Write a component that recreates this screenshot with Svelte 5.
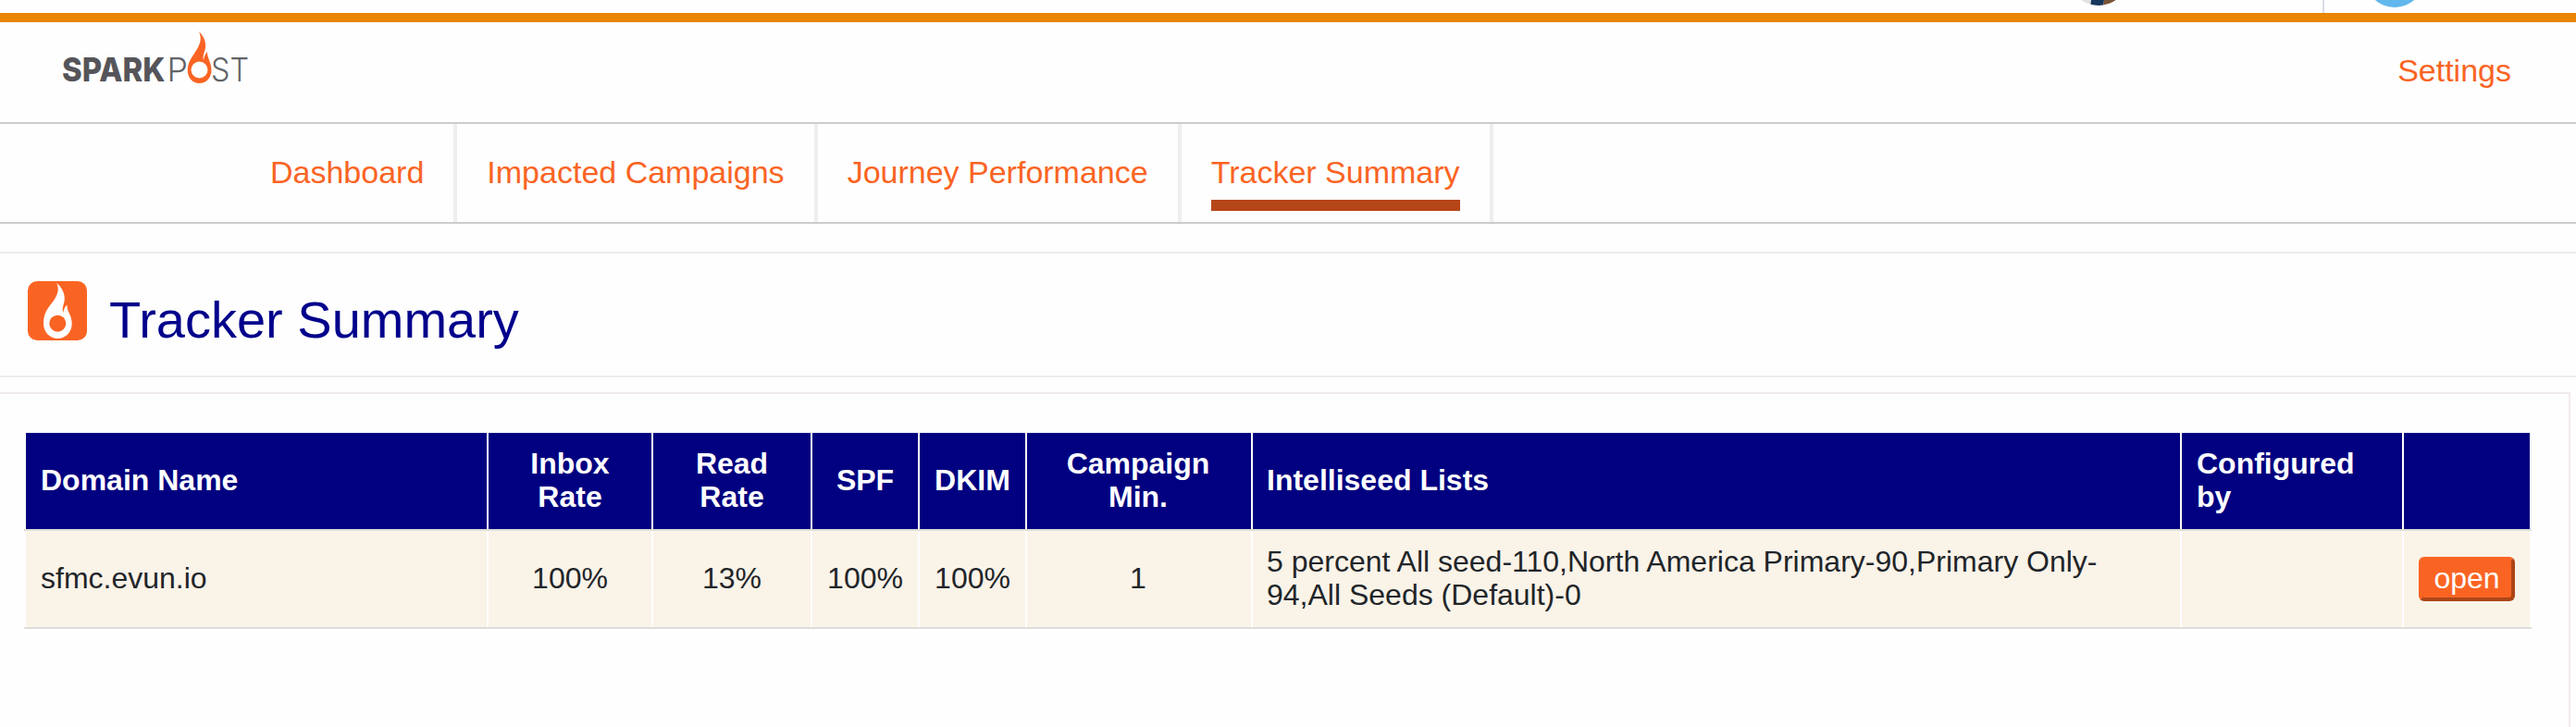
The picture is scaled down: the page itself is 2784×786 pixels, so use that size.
<script>
  const tabs = ['Dashboard', 'Impacted Campaigns', 'Journey Performance', 'Tracker Summary'];
  const active = 'Tracker Summary';
  const columns = [
    { label: 'Domain Name', left: true },
    { label: 'Inbox Rate' },
    { label: 'Read Rate' },
    { label: 'SPF' },
    { label: 'DKIM' },
    { label: 'Campaign Min.' },
    { label: 'Intelliseed Lists', left: true },
    { label: 'Configured by', left: true },
    { label: '' }
  ];
</script>

<div class="page">
  <div class="topbar">
    <svg width="680" height="14" viewBox="2104 0 680 14">
      <defs>
        <clipPath id="avatar"><circle cx="2268" cy="-26" r="32" /></clipPath>
      </defs>
      <g clip-path="url(#avatar)">
        <rect x="2236" y="0" width="24" height="8" fill="#dfe1e3" />
        <path d="M2260 0h14l-1 8h-14z" fill="#17365d" />
        <path d="M2274 0h16v8h-17z" fill="#7a5238" />
      </g>
      <rect x="2510" y="0" width="2" height="14" fill="#d8dde6" />
      <circle cx="2588" cy="-24" r="32" fill="#62b7ed" />
    </svg>
  </div>

  <header>
    <svg class="logo" width="224" height="80" viewBox="56 32 224 80">
      <g font-size="36" font-family="Inter, sans-serif">
        <text x="67" y="87.500" font-weight="800" fill="#55555a" textLength="111.500" lengthAdjust="spacingAndGlyphs">SPARK</text>
        <g font-weight="300" fill="#636468">
          <text x="180.500" y="87.500" textLength="22.500" lengthAdjust="spacingAndGlyphs">P</text>
          <text x="228" y="87.500" textLength="41" lengthAdjust="spacingAndGlyphs">ST</text>
        </g>
      </g>
      <circle cx="215.500" cy="75.500" r="11" fill="#fff" />
      <path fill="#fa6423" fill-rule="evenodd" d="M215 34C221 40 223.500 47 221.500 54C220 59 219 61 220 65C220.500 61 222 58 224 56C223.500 62 228.500 67 228.500 76C228.500 84 223 90 215.500 90C208 90 202.800 84 202.800 76C202.800 66 209 60 213 53C217 46 218 41 215 34ZM215.500 66.500A9 9 0 1 0 215.500 84.500A9 9 0 1 0 215.500 66.500Z" />
    </svg>
    <a class="settings" href="#settings">Settings</a>
  </header>

  <nav>
    {#each tabs as tab}
      <div class="tab"><a href="#tab" class:active={tab === active}>{tab}</a></div>
    {/each}
  </nav>

  <section class="heading">
    <svg width="64" height="64" viewBox="30 304 64 64">
      <rect x="30" y="304" width="64" height="64" rx="10" fill="#fa6423" />
      <path fill="#fff" fill-rule="evenodd" d="M61.300 306C67 311 71 318 69.500 326C68 332 67 334 68.300 338C69 334 70 332 72.500 329.500C72 337 77.700 340 77.700 350C77.700 359 71 366 62.300 366C54 366 47 359 47 350C47 337 53 332 58 325C63 317 64 313 61.300 306ZM62.300 340.700A9 9 0 1 0 62.300 358.700A9 9 0 1 0 62.300 340.700Z" />
    </svg>
    <h1>Tracker Summary</h1>
  </section>

  <main>
    <div class="grid">
      <div class="row head">
        {#each columns as col}
          <div class="cell" class:left={col.left}>{col.label}</div>
        {/each}
      </div>
      <div class="row">
        <div class="cell left">sfmc.evun.io</div>
        <div class="cell">100%</div>
        <div class="cell">13%</div>
        <div class="cell">100%</div>
        <div class="cell">100%</div>
        <div class="cell">1</div>
        <div class="cell left"><span class="lists">5 percent All seed-110,North America Primary-90,Primary Only-94,All Seeds (Default)-0</span></div>
        <div class="cell"></div>
        <div class="cell action"><button>open</button></div>
      </div>
    </div>
  </main>
</div>

<style>
  :global(body) { background: #fefefe; overflow: hidden; }
  .page {
    width: 2784px;
    height: 786px;
    display: flex;
    flex-direction: column;
    overflow: hidden;
    font-family: 'Liberation Sans', Arial, sans-serif;
    color: #212529;
  }
  .page * { box-sizing: border-box; }
  a { color: #fa6423; text-decoration: none; font-size: 34px; line-height: 40px; }
  .topbar {
    flex: none;
    height: 24px;
    display: flex;
    justify-content: flex-end;
    border-bottom: 10px solid #ea8500;
  }
  header {
    flex: none;
    height: 110px;
    display: flex;
    justify-content: space-between;
    align-items: flex-start;
    padding: 8px 70px 0 56px;
    border-bottom: 2px solid #ccc;
  }
  .settings { margin-top: 24px; }
  nav {
    flex: none;
    height: 108px;
    display: flex;
    padding-left: 260px;
    border-bottom: 2px solid #ccc;
  }
  .tab { padding: 32px 32px 0; border-right: 4px solid #eee; }
  .tab a { display: block; height: 62px; white-space: nowrap; }
  .tab a.active { border-bottom: 12px solid #b54618; }
  .heading {
    flex: none;
    height: 136px;
    margin-top: 30px;
    display: flex;
    align-items: flex-start;
    gap: 24px;
    padding: 30px 0 0 30px;
    border-top: 2px solid #f0ebeb;
    border-bottom: 2px solid #f0ebeb;
  }
  h1 { margin: 10px 0 0; font-size: 56px; line-height: 64px; font-weight: 400; color: #00008b; }
  main {
    flex: 1;
    margin: 16px 6px 0 0;
    padding: 42px 40px 0 26px;
    border-top: 2px solid #f0ebeb;
    border-right: 2px solid #f0ebeb;
  }
  .row {
    display: grid;
    grid-template-columns: 498px 176px 170px 114px 114px 242px 1002px 238px 136px;
    gap: 2px;
    height: 106px;
    padding: 0 2px;
    border-bottom: 2px solid #ddd;
    font-size: 32px;
    line-height: 36px;
  }
  .cell {
    display: flex;
    align-items: center;
    justify-content: center;
    text-align: center;
    padding: 0 16px 2px;
    background: #faf3e8;
  }
  .cell:nth-child(4), .cell:nth-child(5) { padding: 0 0 2px; }
  .cell.left { justify-content: flex-start; text-align: left; padding: 0 16px 2px; }
  .cell.left:nth-child(7) { padding-left: 15px; }
  .cell:nth-child(2), .cell:nth-child(3) { padding: 0 38px 2px; }
  .cell:nth-child(6) { padding: 0 42px 2px 40px; }
  .cell.action { padding: 0; }
  .head .cell { background: #000080; color: #fff; font-weight: 700; }
  .lists { width: 920px; }
  button {
    flex: none;
    width: 104px;
    height: 48px;
    padding: 0 0 2px;
    border: 4px solid;
    border-color: #fa6423 #ac4518 #ac4518 #fa6423;
    border-radius: 6px;
    background: #fa6423;
    color: #fff;
    font: 32px/38px 'Liberation Sans', Arial, sans-serif;
  }
</style>
